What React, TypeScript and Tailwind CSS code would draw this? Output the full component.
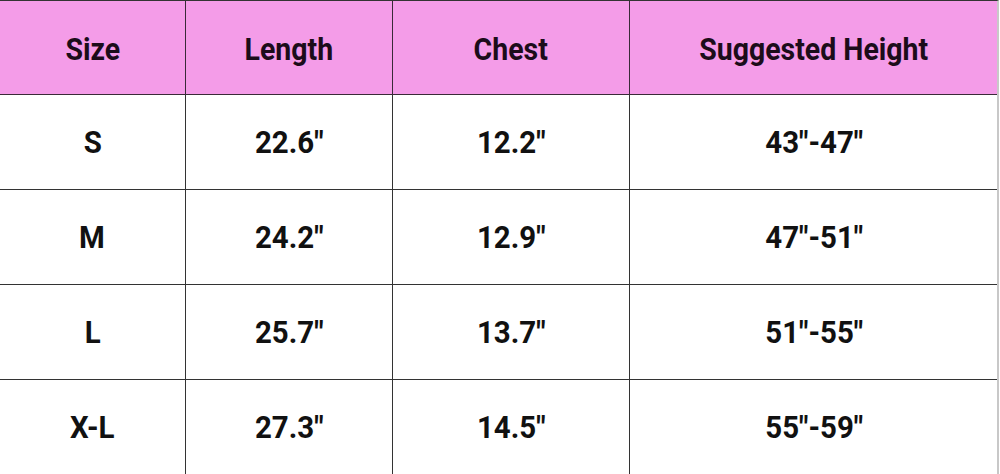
import React from "react";

const rows = [
  ["S", "22.6\"", "12.2\"", "43\"-47\""],
  ["M", "24.2\"", "12.9\"", "47\"-51\""],
  ["L", "25.7\"", "13.7\"", "51\"-55\""],
  ["X-L", "27.3\"", "14.5\"", "55\"-59\""],
];

const headers = ["Size", "Length", "Chest", "Suggested Height"];

const cols = "grid grid-cols-[186px_207px_237px_368px]";

const App = () => {
  return (
    <div
      className="w-[1000px] h-[474px] bg-white overflow-hidden"
      style={{ fontFamily: 'Roboto, "Liberation Sans", sans-serif' }}
    >
      <div className="w-[999px] border-t border-[#333] border-r-2 border-r-[#c8c8c8]">
        <div className={`${cols} h-[94px] bg-[#f49ce8] border-b border-[#3a2a38]`}>
          {headers.map((h, i) => (
            <div
              key={h}
              className={`flex items-center justify-center text-[#1c0c1a] font-bold text-[32px] ${i < 3 ? "border-r border-[#3a2a38]" : ""}`}
            >
              <span className="inline-block scale-x-[0.89] translate-y-[1px]">{h}</span>
            </div>
          ))}
        </div>
        {rows.map((r, ri) => (
          <div
            key={r[0]}
            className={`${cols} h-[95px] border-b ${ri === rows.length - 1 ? "border-[#c8c8c8]" : "border-[#333]"}`}
          >
            {r.map((c, i) => (
              <div
                key={i}
                className={`flex items-center justify-center text-[#111] font-bold text-[32px] ${i < 3 ? "border-r border-[#333]" : ""}`}
              >
                <span className="inline-block scale-x-[0.92]">{c}</span>
              </div>
            ))}
          </div>
        ))}
      </div>
    </div>
  );
};

export default App;
